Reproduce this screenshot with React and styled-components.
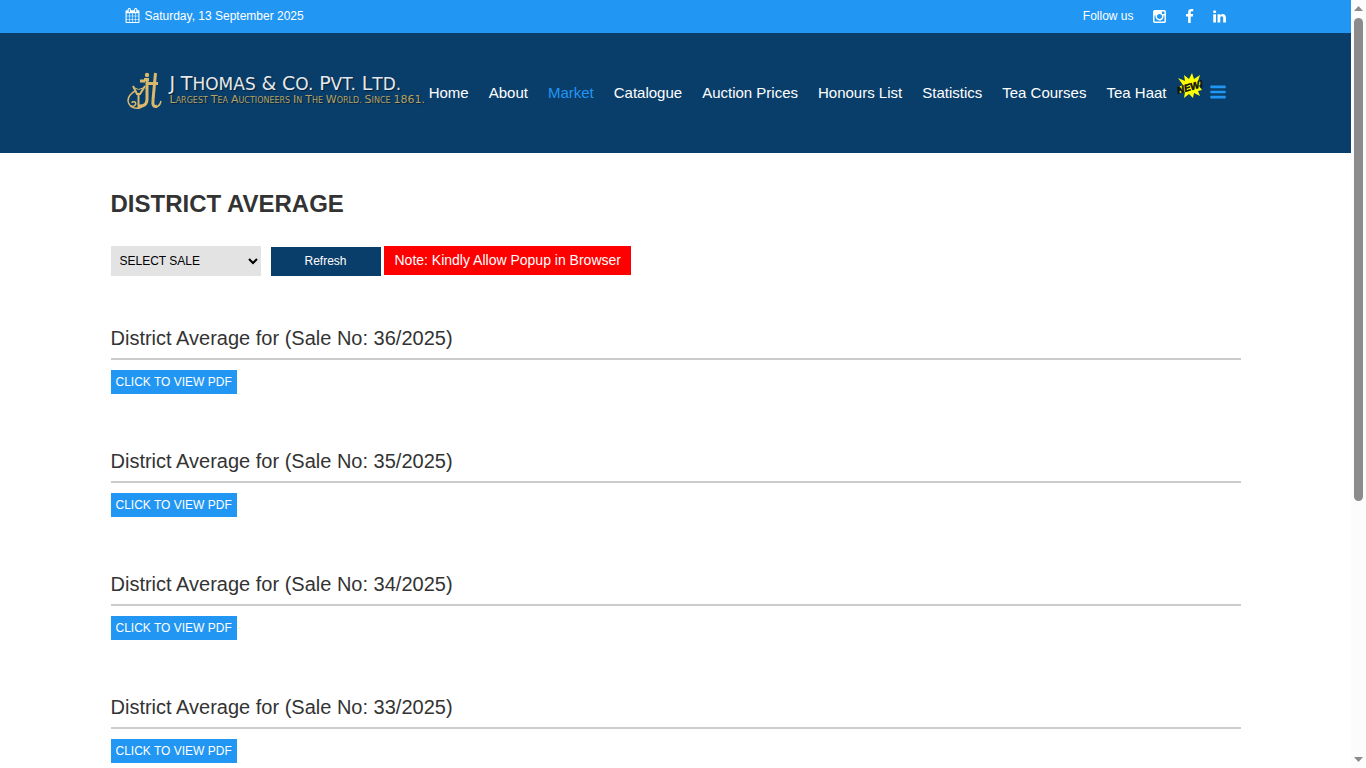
import React from "react";
import styled, { createGlobalStyle, css } from "styled-components";

const blue = "#2196f3";
const navy = "#0a3e6a";

const GlobalStyle = createGlobalStyle`
  * { box-sizing: border-box; }
  body {
    margin: 0;
    background: #fff;
    color: #333;
    font-family: "Liberation Sans", Arial, sans-serif;
    font-size: 12px;
  }
`;

const Window = styled.div`
  display: flex;
  height: 100vh;
  overflow: hidden;
`;

const Page = styled.div`
  flex: 1;
  min-width: 0;
  overflow: hidden;
`;

const Container = styled.div`
  max-width: 1130px;
  margin: 0 auto;
`;

const TopBar = styled.div`
  background: ${blue};
  color: #fff;
`;

const TopBarInner = styled(Container)`
  display: flex;
  justify-content: space-between;
  align-items: center;
  height: 33px;
  padding: 0 14px 2px;
`;

const DateText = styled.div`
  display: flex;
  align-items: center;
  gap: 5px;
`;

const Social = styled.div`
  display: flex;
  align-items: center;
  gap: 15px;
`;

const FollowLabel = styled.span`
  margin-right: 3px;
`;

const SocialLink = styled.a`
  display: flex;
  padding-top: 2px;
  color: #fff;
`;

const Icon = styled.svg`
  display: block;
  width: ${(p) => p.$size}px;
  height: ${(p) => p.$size}px;
  fill: currentColor;
`;

const Header = styled.header`
  background: ${navy};
`;

const HeaderInner = styled(Container)`
  display: flex;
  align-items: center;
  justify-content: space-between;
  height: 120px;
  padding: 0 14px;
`;

const Logo = styled.a`
  display: flex;
  align-items: center;
  gap: 7px;
  padding: 0 0 2px 2px;
  text-decoration: none;
  white-space: nowrap;
`;

const Monogram = styled.svg`
  display: block;
  width: 36px;
  height: 40px;
`;

const LogoText = styled.span`
  display: flex;
  flex-direction: column;
  padding-bottom: 2px;
  font-family: "DejaVu Sans", sans-serif;
  text-transform: uppercase;
  text-shadow: 1px 1px 1px rgba(0, 0, 0, 0.5);
`;

const Word = styled.span`
  display: inline-block;
  font-size: ${(p) => (p.$full ? p.$cap : p.$small)}px;

  &::first-letter {
    font-size: ${(p) => p.$cap}px;
  }
`;

const LogoName = styled.span`
  color: #e4e8ec;
  font-size: 18px;
  line-height: 18px;
`;

const LogoTagline = styled.span`
  color: #b5a268;
  font-size: 9px;
  line-height: 14px;
`;

const Nav = styled.nav`
  display: flex;
  align-items: center;
  gap: 6px;
`;

const NavList = styled.ul`
  display: flex;
  gap: 20px;
  margin: 0;
  padding: 0;
  list-style: none;
`;

const NavLink = styled.a`
  color: ${(p) => (p.$active ? blue : "#fff")};
  font-size: 15px;
  line-height: 20px;
  text-decoration: none;
  white-space: nowrap;
`;

const NavItem = styled.li`
  display: flex;
  gap: 10px;
`;

const NewBadge = styled.svg`
  display: block;
  width: 26px;
  height: 26px;
  margin: -10px 0 -4px;
`;

const MenuButton = styled.button`
  display: flex;
  padding: 0 0 2px;
  border: 0;
  background: none;
  color: ${blue};
`;

const Main = styled(Container).attrs({ as: "main" })`
  padding-top: 36px;
`;

const Title = styled.h1`
  margin: 0 0 27px;
  font-size: 24px;
  line-height: 30px;
`;

const Filters = styled.form`
  display: flex;
  align-items: flex-start;
`;

const SaleSelect = styled.select`
  width: 150px;
  height: 30px;
  margin-right: 10px;
  padding: 0 5px;
  border: 0;
  border-radius: 0;
  background: #e3e3e3;
  color: #000;
  font: inherit;
`;

const solid = css`
  border: 0;
  color: #fff;
  font-family: inherit;
`;

const Refresh = styled.button`
  ${solid}
  width: 110px;
  height: 29px;
  margin: 1px 3px 0 0;
  padding: 0 0 1px;
  background: ${navy};
  font-size: 12px;
`;

const Note = styled.span`
  ${solid}
  padding: 0 10px 0 11px;
  background: #f00;
  font-size: 14px;
  line-height: 29px;
`;

const Report = styled.section`
  margin-top: 48px;

  & + & {
    margin-top: 53px;
  }
`;

const ReportTitle = styled.h2`
  margin: 0 0 10px;
  padding-bottom: 6px;
  border-bottom: 2px solid #ccc;
  font-size: 20px;
  font-weight: 400;
  line-height: 28px;
`;

const PdfLink = styled.a`
  ${solid}
  display: inline-block;
  padding: 0 5px;
  background: ${blue};
  line-height: 24px;
  text-decoration: none;
  vertical-align: top;
`;

const Scrollbar = styled.div`
  display: flex;
  flex-direction: column;
  align-items: center;
  justify-content: space-between;
  width: 15px;
  padding: 6px 0;
  background: #fcfcfc;
`;

const ScrollTrack = styled.div`
  flex: 1;
  width: 9px;
  margin: 7px 0;
`;

const ScrollThumb = styled.div`
  height: 66%;
  border-radius: 5px;
  background: #8b8b8b;
`;

const ScrollArrow = styled.svg`
  display: block;
  width: 9px;
  height: 5px;
  fill: #8b8b8b;
`;

const paths = {
  calendar:
    "M192 1664h288v-288h-288v288zm352 0h320v-288h-320v288zm-352-352h288v-320h-288v320zm352 0h320v-320h-320v320zm-352-384h288v-288h-288v288zm736 736h320v-288h-320v288zm-384-736h320v-288h-320v288zm768 736h288v-288h-288v288zm-384-352h320v-320h-320v320zm-352-864v-288q0-13-9.5-22.5t-22.5-9.5h-64q-13 0-22.5 9.5t-9.5 22.5v288q0 13 9.5 22.5t22.5 9.5h64q13 0 22.5-9.5t9.5-22.5zm736 864h288v-320h-288v320zm-384-384h320v-288h-320v288zm384 0h288v-288h-288v288zm32-480v-288q0-13-9.5-22.5t-22.5-9.5h-64q-13 0-22.5 9.5t-9.5 22.5v288q0 13 9.5 22.5t22.5 9.5h64q13 0 22.5-9.5t9.5-22.5zm384-64v1280q0 52-38 90t-90 38h-1408q-52 0-90-38t-38-90v-1280q0-52 38-90t90-38h128v-96q0-66 47-113t113-47h64q66 0 113 47t47 113v96h384v-96q0-66 47-113t113-47h64q66 0 113 47t47 113v96h128q52 0 90 38t38 90z",
  instagram:
    "M1490 1426v-648h-135q20 63 20 131 0 126-64 232.5t-174 168.5-240 62q-197 0-337-135.5t-140-327.5q0-68 20-131h-141v648q0 26 17.5 43.5t43.5 17.5h1069q25 0 43-17.5t18-43.5zm-284-533q0-124-90.5-211.5t-218.5-87.5q-127 0-217.5 87.5t-90.5 211.5 90.5 211.5 217.5 87.5q128 0 218.5-87.5t90.5-211.5zm284-360v-165q0-28-20-48.5t-49-20.5h-174q-29 0-49 20.5t-20 48.5v165q0 29 20 49t49 20h174q29 0 49-20t20-49zm174-208v1142q0 81-58 139t-139 58h-1142q-81 0-139-58t-58-139v-1142q0-81 58-139t139-58h1142q81 0 139 58t58 139z",
  facebook:
    "M1343 12v264h-157q-86 0-116 36t-30 108v189h293l-39 296h-254v759h-306v-759h-255v-296h255v-218q0-186 104-288.5t277-102.5q147 0 228 12z",
  linkedin:
    "M477 625v991h-330v-991h330zm21-306q1 73-50.5 122t-135.5 49h-2q-82 0-132-49t-50-122q0-74 51.5-122.5t134.5-48.5 133 48.5 51 122.5zm1166 729v568h-329v-530q0-105-40.5-164.5t-126.5-59.5q-63 0-105.5 34.5t-63.5 85.5q-11 30-11 81v553h-329q2-399 2-647t-1-296l-1-48h329v144h-2q20-32 41-56t56.5-52 87-43.5 114.5-15.5q171 0 275 113.5t104 332.5z",
  bars: "M1664 1344v128q0 26-19 45t-45 19h-1408q-26 0-45-19t-19-45v-128q0-26 19-45t45-19h1408q26 0 45 19t19 45zm0-512v128q0 26-19 45t-45 19h-1408q-26 0-45-19t-19-45v-128q0-26 19-45t45-19h1408q26 0 45 19t19 45zm0-512v128q0 26-19 45t-45 19h-1408q-26 0-45-19t-19-45v-128q0-26 19-45t45-19h1408q26 0 45 19t19 45z",
};

const Glyph = ({ name, size }) => (
  <Icon $size={size} viewBox="0 0 1792 1792" aria-hidden="true">
    <path d={paths[name]} />
  </Icon>
);

const Words = ({ text, cap, small }) =>
  text.split(" ").map((word, i) => (
    <React.Fragment key={i}>
      {i > 0 && " "}
      <Word $cap={cap} $small={small} $full={/^[\d&]/.test(word)}>
        {word}
      </Word>
    </React.Fragment>
  ));

const menu = [
  "Home",
  "About",
  "Market",
  "Catalogue",
  "Auction Prices",
  "Honours List",
  "Statistics",
  "Tea Courses",
  "Tea Haat",
];

const sales = ["36/2025", "35/2025", "34/2025", "33/2025"];

export default function App() {
  return (
    <Window>
      <GlobalStyle />
      <Page>
        <TopBar>
          <TopBarInner>
            <DateText>
              <Glyph name="calendar" size={15} />
              Saturday, 13 September 2025
            </DateText>
            <Social>
              <FollowLabel>Follow us</FollowLabel>
              {["instagram", "facebook", "linkedin"].map((name) => (
                <SocialLink key={name} href="#" aria-label={name}>
                  <Glyph name={name} size={15} />
                </SocialLink>
              ))}
            </Social>
          </TopBarInner>
        </TopBar>
        <Header>
          <HeaderInner>
            <Logo href="#">
              <Monogram viewBox="0 0 36 40" fill="none" stroke="#d9b96c" aria-hidden="true">
                <circle cx="20" cy="3" r="2.200" fill="#d9b96c" stroke="none" />
                <path d="M13 9h5M17 7.500h5M11 34q9 1 9-7V8" strokeWidth="3" />
                <path d="M28.500 1L26 28q-1 8 4 6M21 11.500h10" strokeWidth="3" />
                <path d="M29 35q4-1 5-6" strokeWidth="1.500" />
                <path d="M6 14l4 8h3l5-8M11.500 21v16" strokeWidth="2" />
                <path d="M8 16q3 3 8 0" strokeWidth="1" />
                <path d="M8 19q-7 4-7 10 1 6 6 5 3-2 1-4-3-1-3 1M3 34q5 4 12 1" strokeWidth="1.500" />
              </Monogram>
              <LogoText>
                <LogoName>
                  <Words text="J Thomas & Co. Pvt. Ltd." cap={19} small={17} />
                </LogoName>
                <LogoTagline>
                  <Words
                    text="Largest Tea Auctioneers In The World. Since 1861."
                    cap={11}
                    small={8}
                  />
                </LogoTagline>
              </LogoText>
            </Logo>
            <Nav>
              <NavList>
                {menu.map((label) => (
                  <NavItem key={label}>
                    <NavLink href="#" $active={label === "Market"}>
                      {label}
                    </NavLink>
                    {label === "Tea Haat" && (
                      <NewBadge viewBox="0 0 26 26" aria-label="New">
                        <path
                          d="M1 5l7 3-1-6 5 4 3-6 2 6 6-4-2 6 4 1-3 4 3 4-4 1 2 5-6-3-1 5-4-4-5 4 1-6-7 1 4-4-4-2 5-2z"
                          fill="#ff0"
                        />
                        <text
                          x="1"
                          y="21"
                          fill="#111"
                          stroke="#111"
                          strokeWidth="0.500"
                          fontSize="10"
                          fontWeight="700"
                          fontStyle="italic"
                          transform="rotate(-16 1 21)"
                        >
                          NEW!
                        </text>
                      </NewBadge>
                    )}
                  </NavItem>
                ))}
              </NavList>
              <MenuButton type="button" aria-label="Open menu">
                <Glyph name="bars" size={18} />
              </MenuButton>
            </Nav>
          </HeaderInner>
        </Header>
        <Main>
          <Title>DISTRICT AVERAGE</Title>
          <Filters>
            <SaleSelect aria-label="Select sale" defaultValue="">
              <option value="">SELECT SALE</option>
              {sales.map((sale) => (
                <option key={sale}>{sale}</option>
              ))}
            </SaleSelect>
            <Refresh type="button">Refresh</Refresh>
            <Note>Note: Kindly Allow Popup in Browser</Note>
          </Filters>
          {sales.map((sale) => (
            <Report key={sale}>
              <ReportTitle>District Average for (Sale No: {sale})</ReportTitle>
              <PdfLink href="#">CLICK TO VIEW PDF</PdfLink>
            </Report>
          ))}
        </Main>
      </Page>
      <Scrollbar aria-hidden="true">
        <ScrollArrow viewBox="0 0 9 5">
          <path d="M0 5L4.500 0 9 5z" />
        </ScrollArrow>
        <ScrollTrack>
          <ScrollThumb />
        </ScrollTrack>
        <ScrollArrow viewBox="0 0 9 5">
          <path d="M0 0L4.500 5 9 0z" />
        </ScrollArrow>
      </Scrollbar>
    </Window>
  );
}
